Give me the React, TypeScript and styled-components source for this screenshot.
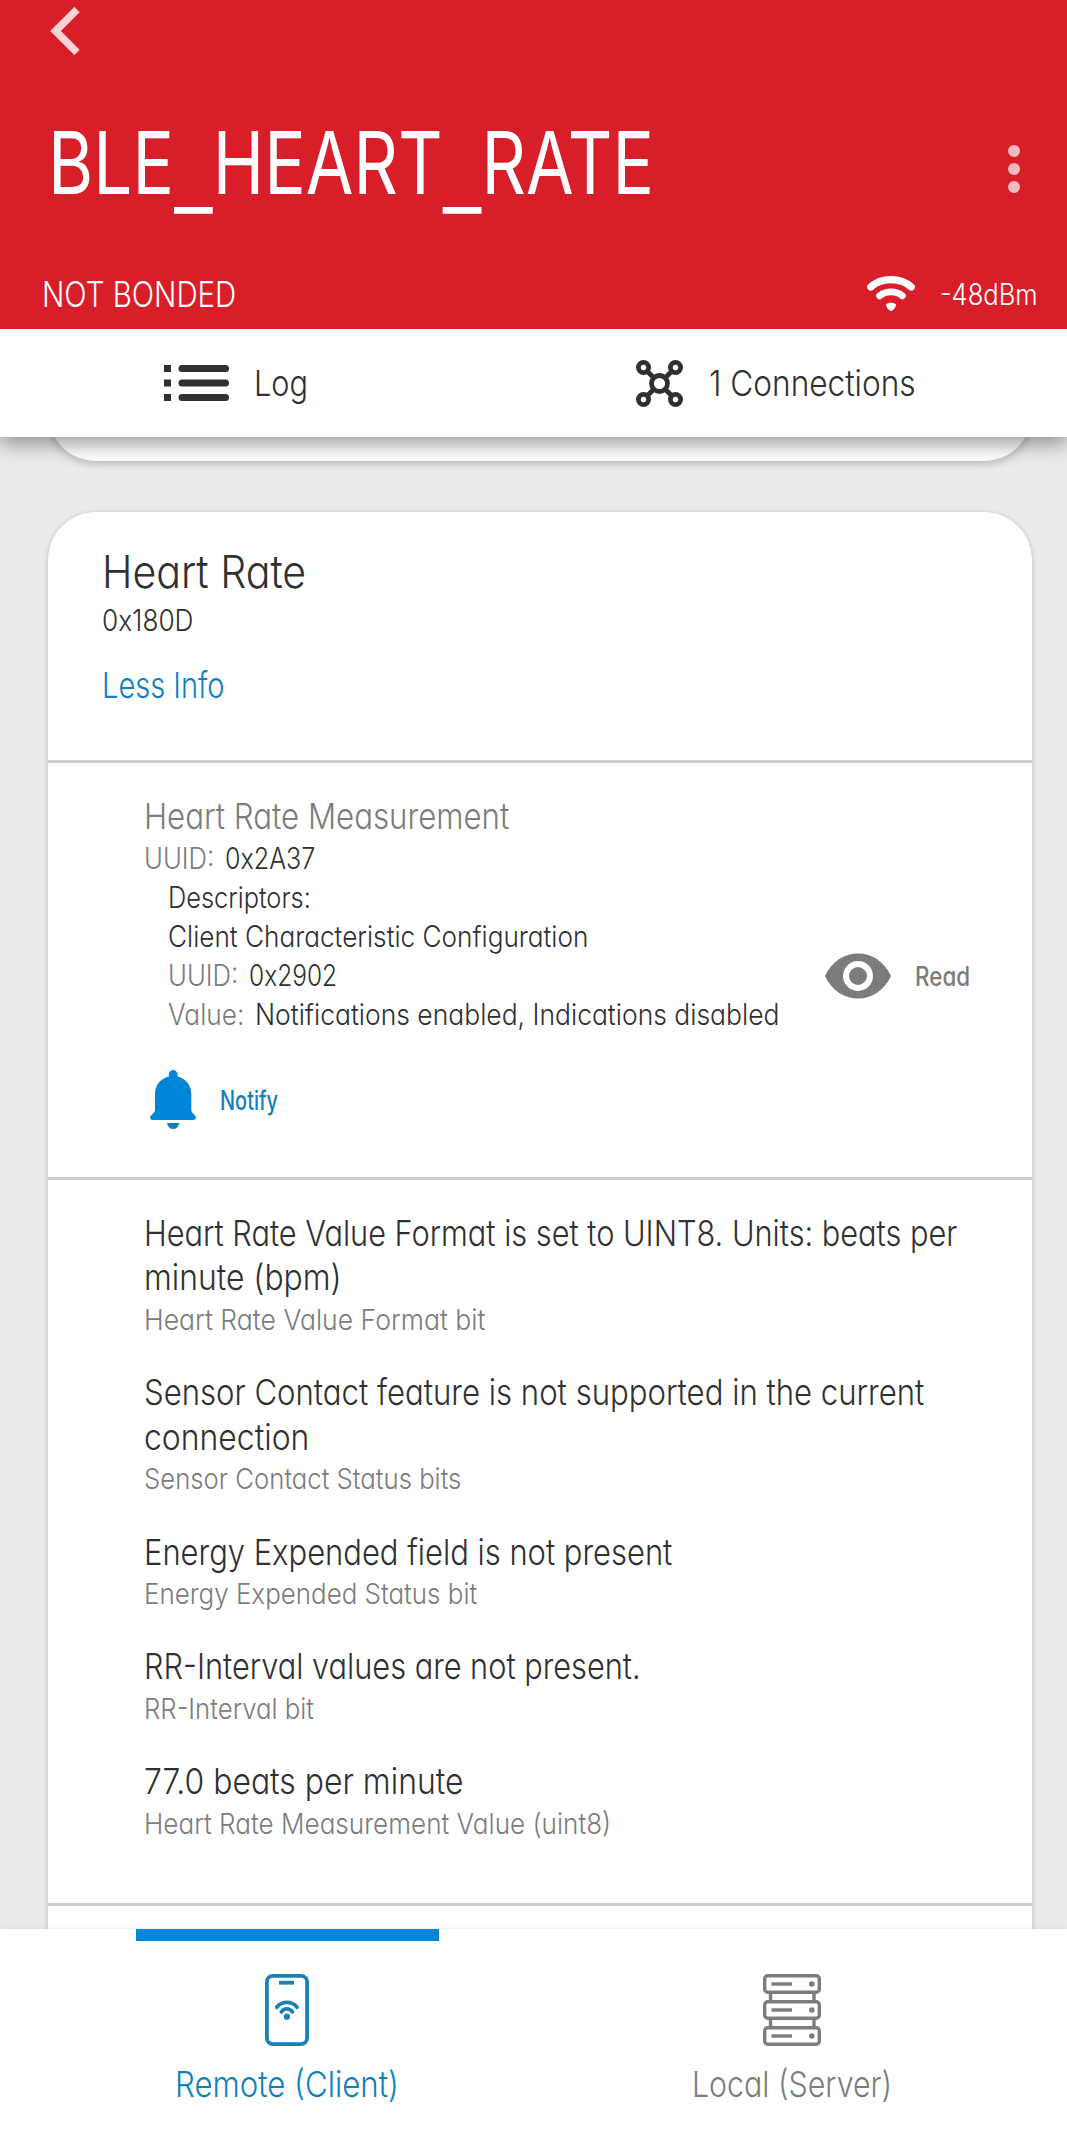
import React, { ReactNode, useLayoutEffect, useRef, useState } from 'react';
import styled, { createGlobalStyle } from 'styled-components';

const color = {
  red: '#d81e28',
  ink: '#2f3031',
  grey: '#7c7c7c',
  blue: '#0086d9',
  link: '#0f7fbe',
  rule: '#cccccc',
  page: '#ebebeb',
};

const GlobalStyle = createGlobalStyle`
  * { box-sizing: border-box; }
  body {
    margin: 0;
    background: ${color.page};
    color: ${color.ink};
    font-family: Inter, 'Liberation Sans', sans-serif;
    font-feature-settings: 'cv11';
  }
`;

/* ---------- condensed text ---------- */

const TextBox = styled.span<{ $w: number; $size: number; $lh: number; $color?: string; $weight?: number }>`
  display: block;
  flex: none;
  width: ${(p) => p.$w}px;
  height: ${(p) => p.$lh}px;
  line-height: ${(p) => p.$lh}px;
  font-size: ${(p) => p.$size}px;
  font-weight: ${(p) => p.$weight ?? 350};
  color: ${(p) => p.$color ?? 'inherit'};
  white-space: nowrap;
`;

const Glyphs = styled.span`
  display: inline-block;
  transform-origin: 0 50%;
`;

type TextProps = { w: number; size: number; lh: number; color?: string; weight?: number; children: ReactNode };

/* Condenses a line of text horizontally until it fills its width. */
function Text({ w, size, lh, color: c, weight, children }: TextProps) {
  const ref = useRef<HTMLSpanElement>(null);
  const [scale, setScale] = useState(0.85);
  useLayoutEffect(() => {
    if (ref.current) setScale(w / ref.current.offsetWidth);
  }, [w, children]);
  return (
    <TextBox $w={w} $size={size} $lh={lh} $color={c} $weight={weight}>
      <Glyphs ref={ref} style={{ transform: `scaleX(${scale})` }}>{children}</Glyphs>
    </TextBox>
  );
}

/* Underscore set wide and well below the baseline. */
const LowBar = styled.span`
  font-size: 1.25em;
  font-weight: 310;
  line-height: 0;
  vertical-align: -13px;
`;

/* ---------- layout ---------- */

const Screen = styled.div`
  width: 1067px;
  height: 2144px;
  display: flex;
  flex-direction: column;
  overflow: hidden;
  background: ${color.page};
`;

const Header = styled.header`
  flex: none;
  height: 329px;
  display: flex;
  flex-direction: column;
  background: ${color.red};
  color: #fff;
`;

const BackRow = styled.div`
  height: 62px;
  padding-left: 50px;
  display: flex;
  align-items: center;
`;

const TitleRow = styled.div`
  height: 201px;
  padding: 0 47px 0 48px;
  display: flex;
  align-items: center;
  justify-content: space-between;
`;

const MoreDots = styled.div`
  height: 62px;
  padding-top: 13px;
  display: flex;
  flex-direction: column;
  justify-content: center;
  gap: 6px;
`;

const Dot = styled.i`
  width: 12px;
  height: 12px;
  border-radius: 50%;
  background: #f3b9bf;
`;

const StatusRow = styled.div`
  height: 62px;
  padding: 0 29px 0 42px;
  display: flex;
  align-items: center;
  justify-content: space-between;
`;

const Signal = styled.div`
  display: flex;
  align-items: center;
  gap: 24px;
`;

const Toolbar = styled.nav`
  position: relative;
  z-index: 1;
  flex: none;
  height: 108px;
  padding-left: 164px;
  display: flex;
  align-items: center;
  background: #fff;
  box-shadow: 0 6px 20px rgba(0, 0, 0, 0.42);
  clip-path: inset(0 0 -40px 0);
`;

const ToolItem = styled.div<{ $width: number; $gap: number }>`
  width: ${(p) => p.$width}px;
  display: flex;
  align-items: center;
  gap: ${(p) => p.$gap}px;
`;

const Scroll = styled.main`
  flex: none;
  height: 1492px;
  padding: 0 35px 0 48px;
  overflow: hidden;
`;

const CardTail = styled.div`
  height: 96px;
  margin-top: -72px;
  border-radius: 0 0 48px 48px;
  background: #fff;
  box-shadow: 0 3px 8px rgba(0, 0, 0, 0.2);
`;

const Card = styled.section`
  height: 1500px;
  margin-top: 51px;
  border-radius: 48px 48px 0 0;
  background: #fff;
  box-shadow: 0 1px 5px rgba(0, 0, 0, 0.24);
`;

const ServiceHead = styled.div`
  height: 251px;
  padding: 33px 0 0 54px;
  border-bottom: 3px solid ${color.rule};
`;

const InfoLink = styled.div`
  margin-top: 22px;
`;

const Characteristic = styled.div`
  height: 417px;
  padding: 31px 0 0 96px;
  display: flex;
  border-bottom: 3px solid ${color.rule};
`;

const Details = styled.div`
  width: 681px;
`;

const Descriptor = styled.div`
  padding-left: 24px;
`;

const Pair = styled.div<{ $gap: number }>`
  display: flex;
  gap: ${(p) => p.$gap}px;
`;

const Action = styled.div<{ $top: number; $gap: number; $indent?: number }>`
  height: 60px;
  margin-top: ${(p) => p.$top}px;
  padding-left: ${(p) => p.$indent ?? 0}px;
  display: flex;
  align-items: center;
  gap: ${(p) => p.$gap}px;
`;

const Values = styled.div`
  height: 726px;
  padding: 31.2px 0 0 96px;
  display: flex;
  flex-direction: column;
  gap: 30.6px;
  border-bottom: 3px solid ${color.rule};
`;

const Tabs = styled.footer`
  position: relative;
  flex: none;
  height: 215px;
  padding-left: 34.5px;
  display: grid;
  grid-template-columns: 505px 505px;
  background: #fff;
  box-shadow: 0 -1px 6px rgba(0, 0, 0, 0.07);
`;

const Tab = styled.div`
  display: flex;
  flex-direction: column;
  align-items: center;
`;

const Indicator = styled.div<{ $on?: boolean }>`
  width: 303px;
  height: 12px;
  margin-bottom: 33px;
  background: ${(p) => (p.$on ? color.blue : 'transparent')};
`;

const TabLabel = styled.div`
  margin-top: 16px;
`;

/* ---------- icons ---------- */

const BackIcon = () => (
  <svg width="30" height="48" viewBox="0 0 30 48" fill="none" stroke="#fbd3d6" strokeWidth="7.5">
    <path d="M27 2.5 5.5 24 27 45.5" />
  </svg>
);

const WifiIcon = () => (
  <svg width="50" height="36" viewBox="0 0 50 36" fill="none" stroke="#fff" strokeLinecap="round">
    <path d="M4.8 11C15.5 1.2 34.5 1.2 45.2 11" strokeWidth="7.2" />
    <path d="M13.6 19.8C20 14.6 30 14.6 36.4 19.8" strokeWidth="6.8" />
    <path d="M20 28.5C22 26 28 26 30 28.5C30 31 27 35 25 35S20 31 20 28.5Z" fill="#fff" stroke="none" />
  </svg>
);

const ListIcon = () => (
  <svg width="65" height="36" viewBox="0 0 65 36" fill={color.ink}>
    {[0, 14.5, 29].map((y) => (
      <g key={y}>
        <rect x="0" y={y} width="7" height="7" />
        <rect x="14.5" y={y} width="50.5" height="7" rx="3.5" />
      </g>
    ))}
  </svg>
);

const HubIcon = () => (
  <svg width="47" height="47" viewBox="0 0 47 47" fill="none" stroke={color.ink} strokeWidth="4.8">
    <circle cx="23.5" cy="23.5" r="8" />
    <circle cx="7.5" cy="7.5" r="5.1" />
    <circle cx="39.5" cy="7.5" r="5.1" />
    <circle cx="7.5" cy="39.5" r="5.1" />
    <circle cx="39.5" cy="39.5" r="5.1" />
    <path d="M11 11l7 7M36 11l-7 7M11 36l7-7M36 36l-7-7" />
  </svg>
);

const EyeIcon = () => (
  <svg width="66" height="46" viewBox="0 0 66 46">
    <path d="M0 23C7 8.5 19 .5 33 .5S59 8.5 66 23C59 37.5 47 45.5 33 45.5S7 37.5 0 23Z" fill={color.grey} />
    <circle cx="33" cy="23" r="12" fill={color.grey} stroke="#fff" strokeWidth="6" />
  </svg>
);

const BellIcon = () => (
  <svg width="46" height="59" viewBox="0 0 46 59" fill={color.blue}>
    <path d="M18.8 6.5V4.5a4.4 4.4 0 0 1 8.8 0V6.5C36 8.500 41.3 15.500 41.3 24V40C41.3 42 43 43.3 45 45.500C47 48 45.500 50 43 50H3C.5 50-1 48 1 45.500C3 43.300 5 42 5 40V24C5 15.500 10.300 8.500 18.800 6.500Z" />
    <path d="M17 53H29.300C28.500 57 26.300 59 23.150 59S17.800 57 17 53Z" fill={color.link} />
  </svg>
);

const PhoneIcon = () => (
  <svg width="44" height="72" viewBox="0 0 44 72" fill="none" stroke="#1b80b8" strokeWidth="3.8" strokeLinecap="round">
    <rect x="1.9" y="1.9" width="40.2" height="68.2" rx="6" />
    <path d="M14 8.7H29" strokeWidth="3.8" strokeLinecap="butt" />
    <path d="M11.800 33.200C17 26.800 26.800 26.800 32 33.200" strokeWidth="3.800" />
    <path d="M16.400 37.800C19.300 34 24.500 34 27.400 37.800" strokeWidth="3.800" />
    <circle cx="21.900" cy="42.700" r="3.100" fill="#1b80b8" stroke="none" />
  </svg>
);

const ServerIcon = () => (
  <svg width="58" height="72" viewBox="0 0 58 72" fill="none" stroke={color.grey} strokeWidth="3.400">
    {[1.7, 27.7, 53.7].map((y) => (
      <g key={y}>
        <rect x="1.700" y={y} width="54.600" height="16.600" rx="3" />
        <path d={`M8.500 ${y + 8.3}H29`} strokeWidth="3.400" />
        <circle cx="48.800" cy={y + 8.3} r="2.800" fill={color.grey} stroke="none" />
      </g>
    ))}
    <path d="M7.500 18V28M51 18V28M7.500 44V54M51 44V54" />
  </svg>
);

/* ---------- content ---------- */

type Line = [text: string, width: number];

const readings: { lines: Line[]; note: Line }[] = [
  {
    lines: [['Heart Rate Value Format is set to UINT8. Units: beats per', 813.5], ['minute (bpm)', 197.5]],
    note: ['Heart Rate Value Format bit', 341.5],
  },
  {
    lines: [['Sensor Contact feature is not supported in the current', 780.5], ['connection', 165]],
    note: ['Sensor Contact Status bits', 317.5],
  },
  { lines: [['Energy Expended field is not present', 528]], note: ['Energy Expended Status bit', 333.5] },
  { lines: [['RR-Interval values are not present.', 497]], note: ['RR-Interval bit', 170.5] },
  { lines: [['77.0 beats per minute', 319]], note: ['Heart Rate Measurement Value (uint8)', 467] },
];

export default function App() {
  return (
    <Screen>
      <GlobalStyle />
      <Header>
        <BackRow><BackIcon /></BackRow>
        <TitleRow>
          <Text w={606} size={87} lh={104} weight={380}>
            BLE<LowBar>_</LowBar>HEART<LowBar>_</LowBar>RATE
          </Text>
          <MoreDots><Dot /><Dot /><Dot /></MoreDots>
        </TitleRow>
        <StatusRow>
          <Text w={194} size={35.8} lh={44}>NOT BONDED</Text>
          <Signal>
            <WifiIcon />
            <Text w={98} size={29.5} lh={40}>-48dBm</Text>
          </Signal>
        </StatusRow>
      </Header>

      <Toolbar>
        <ToolItem $width={472} $gap={24.5}>
          <ListIcon />
          <Text w={54} size={35.8} lh={44}>Log</Text>
        </ToolItem>
        <ToolItem $width={300} $gap={26}>
          <HubIcon />
          <Text w={206.5} size={35.8} lh={44}>1 Connections</Text>
        </ToolItem>
      </Toolbar>

      <Scroll>
        <CardTail />
        <Card>
          <ServiceHead>
            <Text w={204.5} size={45.4} lh={53}>Heart Rate</Text>
            <Text w={91.5} size={29.5} lh={44}>0x180D</Text>
            <InfoLink>
              <Text w={122.5} size={35.8} lh={43} color={color.link}>Less Info</Text>
            </InfoLink>
          </ServiceHead>

          <Characteristic>
            <Details>
              <Text w={365.5} size={35.8} lh={44.5} color={color.grey}>Heart Rate Measurement</Text>
              <Pair $gap={10}>
                <Text w={70.5} size={29.5} lh={39.1} color={color.grey}>UUID:</Text>
                <Text w={90} size={29.5} lh={39.1}>0x2A37</Text>
              </Pair>
              <Descriptor>
                <Text w={143} size={29.5} lh={39.1}>Descriptors:</Text>
                <Text w={420.5} size={29.5} lh={39.1}>Client Characteristic Configuration</Text>
                <Pair $gap={10}>
                  <Text w={70.5} size={29.5} lh={39.1} color={color.grey}>UUID:</Text>
                  <Text w={88} size={29.5} lh={39.1}>0x2902</Text>
                </Pair>
                <Pair $gap={10}>
                  <Text w={76.5} size={29.5} lh={39.1} color={color.grey}>Value:</Text>
                  <Text w={524} size={29.5} lh={39.1}>Notifications enabled, Indications disabled</Text>
                </Pair>
              </Descriptor>
              <Action $top={36} $gap={24} $indent={6}>
                <BellIcon />
                <Text w={58} size={26.5} lh={36} weight={540} color={color.link}>Notify</Text>
              </Action>
            </Details>
            <Action $top={151.5} $gap={24}>
              <EyeIcon />
              <Text w={55} size={26.5} lh={36} weight={540} color={color.grey}>Read</Text>
            </Action>
          </Characteristic>

          <Values>
            {readings.map(({ lines, note }) => (
              <div key={note[0]}>
                {lines.map(([text, w]) => (
                  <Text key={text} w={w} size={35.8} lh={44.3}>{text}</Text>
                ))}
                <Text w={note[1]} size={29} lh={40} color={color.grey}>{note[0]}</Text>
              </div>
            ))}
          </Values>
        </Card>
      </Scroll>

      <Tabs>
        <Tab>
          <Indicator $on />
          <PhoneIcon />
          <TabLabel>
            <Text w={224} size={35.8} lh={44} color={color.link}>Remote (Client)</Text>
          </TabLabel>
        </Tab>
        <Tab>
          <Indicator />
          <ServerIcon />
          <TabLabel>
            <Text w={200} size={35.8} lh={44} color={color.grey}>Local (Server)</Text>
          </TabLabel>
        </Tab>
      </Tabs>
    </Screen>
  );
}
